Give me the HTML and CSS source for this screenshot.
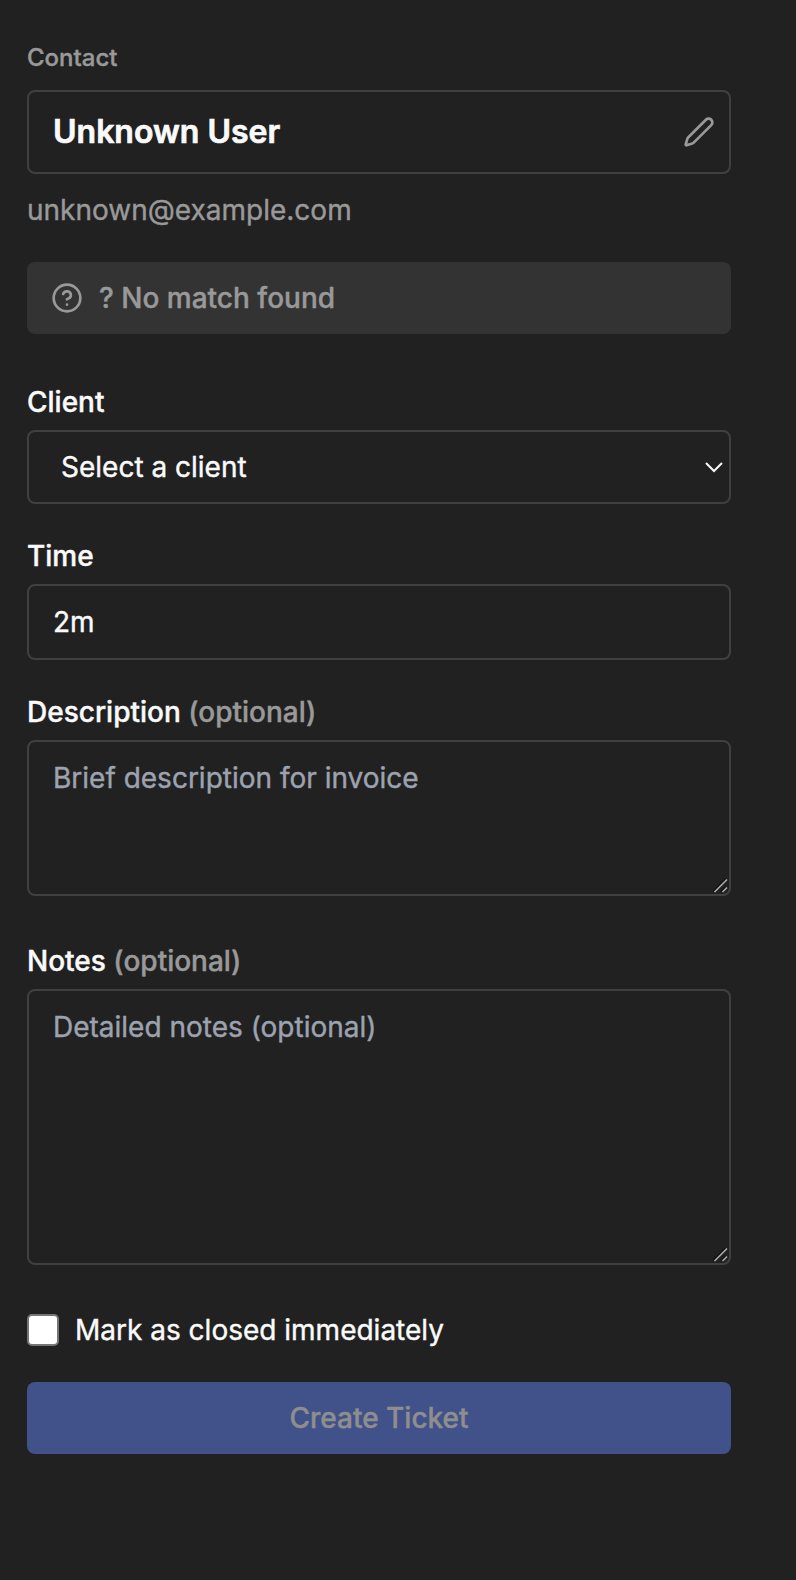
FILE: index.html
```html
<!DOCTYPE html>
<html lang="en">
<head>
<meta charset="utf-8">
<title>Create Ticket</title>
<link rel="stylesheet" href="styles.css">
</head>
<body>
<form class="panel">
  <div class="caption">Contact</div>
  <div class="box contact">
    <span class="name">Unknown User</span>
    <svg class="pencil" viewBox="0 0 24 24"><path d="M21.174 6.812a1 1 0 0 0-3.986-3.987L3.842 16.174a2 2 0 0 0-.5.83l-1.321 4.352a.5.5 0 0 0 .623.622l4.353-1.32a2 2 0 0 0 .83-.497z"/></svg>
  </div>
  <div class="email">unknown@example.com</div>
  <div class="match">
    <svg class="help" viewBox="0 0 24 24"><circle cx="12" cy="12" r="10"/><path d="M9.09 9a3 3 0 0 1 5.83 1c0 2-3 3-3 3M12 17h.01"/></svg>
    <span>? No match found</span>
  </div>
  <label class="label label-client">Client</label>
  <div class="box select">
    <span>Select a client</span>
    <svg class="chevron" viewBox="0 0 18 12"><path d="M1 2 9 10 17 2"/></svg>
  </div>
  <label class="label label-time" for="time">Time</label>
  <input class="box time" id="time" value="2m">
  <label class="label label-description" for="description">Description <span class="optional">(optional)</span></label>
  <div class="area">
    <textarea class="box description" id="description" placeholder="Brief description for invoice"></textarea>
    <svg class="grip" viewBox="0 0 16 16"><path class="grip-shade" d="M0 13.5 12.5 1M8 13.5 12.5 9"/><path d="M1.5 14 14 1.5M9.5 14 14 9.5"/></svg>
  </div>
  <label class="label label-notes" for="notes">Notes <span class="optional">(optional)</span></label>
  <div class="area">
    <textarea class="box notes" id="notes" placeholder="Detailed notes (optional)"></textarea>
    <svg class="grip" viewBox="0 0 16 16"><path class="grip-shade" d="M0 13.5 12.5 1M8 13.5 12.5 9"/><path d="M1.5 14 14 1.5M9.5 14 14 9.5"/></svg>
  </div>
  <label class="closed"><input class="check" type="checkbox"><span>Mark as closed immediately</span></label>
  <button class="submit" type="button" disabled>Create Ticket</button>
</form>
</body>
</html>
```
FILE: styles.css
```css
* {
  box-sizing: border-box;
}

body {
  margin: 0;
  min-height: 1580px;
  background: #212121;
  color: #fafafa;
  font: 400 28px/40px Inter, sans-serif;
  -webkit-text-stroke: 0.4px;
}

.panel {
  display: flex;
  flex-direction: column;
  width: 704px;
  margin-left: 27px;
  padding-top: 42px;
}

svg {
  display: block;
  flex: none;
  fill: none;
  stroke: #999;
  stroke-width: 2;
  stroke-linecap: round;
  stroke-linejoin: round;
}

.caption {
  height: 32px;
  margin-bottom: 16px;
  color: #999;
  font-size: 24px;
  font-weight: 500;
  line-height: 32px;
}

.box {
  display: block;
  width: 100%;
  border: 2px solid #404040;
  border-radius: 8px;
  background: transparent;
  color: #fafafa;
  font: inherit;
  outline: none;
}

.contact {
  display: flex;
  align-items: center;
  justify-content: space-between;
  height: 84px;
  padding: 0 14px 0 24px;
}

.name {
  font-size: 32px;
  font-weight: 600;
  -webkit-text-stroke: 0.7px;
}

.pencil {
  width: 32px;
  height: 32px;
}

.email {
  margin-top: 16px;
  color: #999;
}

.match {
  display: flex;
  align-items: center;
  gap: 16px;
  height: 72px;
  margin-top: 32px;
  padding-left: 24px;
  border-radius: 8px;
  background: #333;
  color: #999;
  font-weight: 500;
}

.help {
  width: 32px;
  height: 32px;
}

.label {
  height: 40px;
  font-weight: 500;
}

.optional {
  color: #999;
}

.label-client {
  margin: 48px 0 8px;
}

.select {
  display: flex;
  align-items: center;
  justify-content: space-between;
  height: 74px;
  padding: 0 6px 0 32px;
}

.chevron {
  width: 18px;
  height: 12px;
  stroke: #fafafa;
  stroke-linecap: butt;
  stroke-linejoin: miter;
}

.label-time {
  margin: 32px 0 8px;
}

.time {
  height: 76px;
  padding: 0 24px;
  -webkit-text-stroke: 0.4px;
}

.label-description {
  margin: 32px 0 8px;
}

.area {
  position: relative;
}

textarea.box {
  padding: 16px 24px;
  resize: none;
  -webkit-text-stroke: 0.4px;
}

textarea.box::placeholder {
  color: #9ca3af;
  opacity: 1;
}

.description {
  height: 156px;
}

.notes {
  height: 276px;
}

.grip {
  position: absolute;
  right: 2px;
  bottom: 2px;
  width: 16px;
  height: 16px;
  stroke: #aaa;
  stroke-width: 1.6;
  stroke-linecap: butt;
}

.grip-shade {
  stroke: #111;
}

.label-notes {
  margin: 45px 0 8px;
}

.closed {
  display: flex;
  align-items: center;
  gap: 16px;
  height: 40px;
  margin-top: 45px;
}

.check {
  appearance: none;
  width: 32px;
  height: 32px;
  margin: 0;
  border: 2px solid #767676;
  border-radius: 5px;
  background: #fff;
}

.submit {
  height: 72px;
  margin-top: 32px;
  padding: 0;
  border: 0;
  border-radius: 8px;
  background: #415189;
  color: #8e8e8e;
  font: inherit;
  font-weight: 500;
  -webkit-text-stroke: 0.4px;
}
```
